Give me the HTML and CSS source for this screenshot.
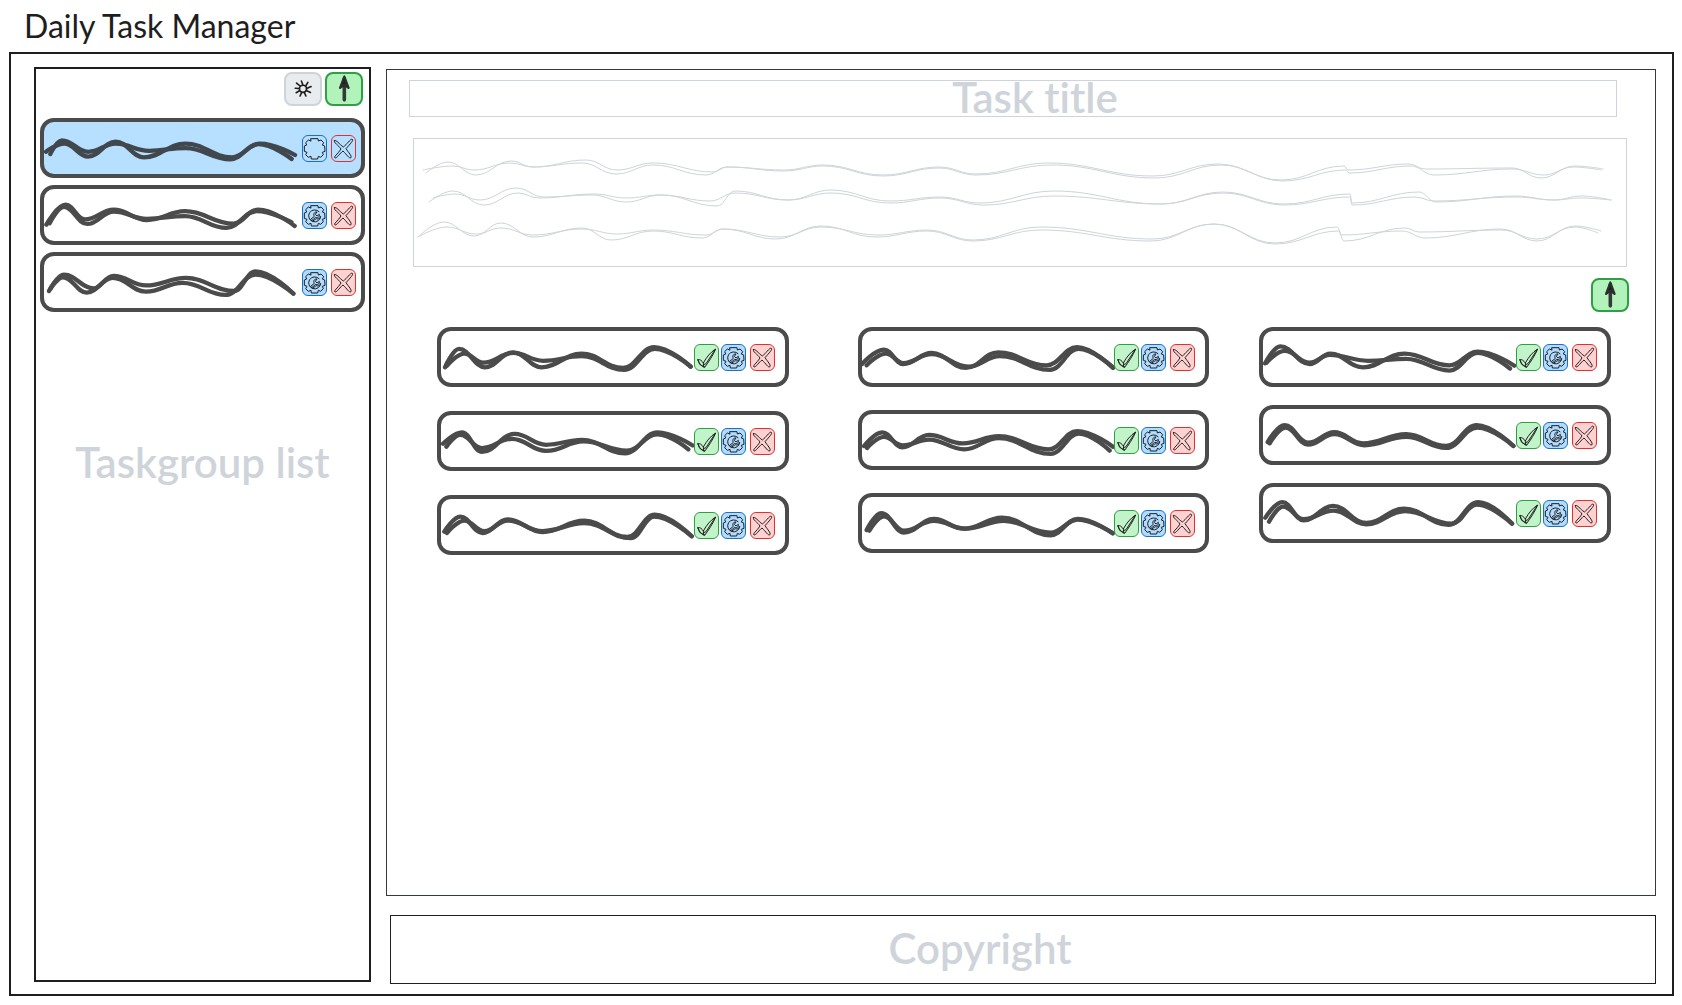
FILE: index.html
```html
<!DOCTYPE html>
<html lang="en">
<head>
<meta charset="utf-8">
<title>Daily Task Manager</title>
<link rel="stylesheet" href="styles.css">
</head>
<body>
<svg class="defs" aria-hidden="true">
  <symbol id="check" viewBox="0 0 69 75"><path d="M9 44C15 42 20 47 25 54C35 36 46 22 62 12C55 30 40 52 29 67C20 66 13 56 9 44ZM25 54L26 64M9 46L14 58L29 66M61 13L33 56L28 58"/></symbol>
  <symbol id="gear-outline" viewBox="0 0 69 75"><path d="M24 8L45 8L46 15L54 12L62 20L58 27L65 30L66 46L58 49L61 56L53 64L46 61L44 69L25 69L24 61L16 64L8 56L12 49L4 46L4 30L11 27L8 20L16 12L23 15Z"/></symbol>
  <symbol id="gear" viewBox="0 0 69 75"><use href="#gear-outline" width="69" height="75"/><path d="M48 26A18 18 0 1 0 53 40C52 46 46 50 40 47L28 55L23 49L34 40C30 33 34 26 42 27L37 34L42 39L49 34C51 41 45 46 38 43L27 52"/></symbol>
  <symbol id="cross" viewBox="0 0 69 75"><path d="M7 14C12 9 22 25 34 33C45 25 54 10 60 9C66 12 58 20 42 38C50 50 60 60 57 65C51 69 45 56 33 45C25 50 15 67 9 66C4 62 16 56 27 39C20 28 4 20 7 14Z"/></symbol>
  <symbol id="arrow" viewBox="0 0 114 105"><path class="shaft" d="M58 20V86"/><path class="head" d="M58 14L45 49L58 39L71 49Z"/></symbol>
  <symbol id="sun" viewBox="0 0 114 105"><circle cx="57" cy="52" r="11"/><path d="M57 41L52 28M65 44L72 32M68 51L82 45M67 57L80 63M61 63L66 74M53 63L48 74M46 58L36 64M46 51L33 50M49 44L37 34"/></symbol>
</svg>

<h1 class="app-title">Daily Task Manager</h1>
<div class="frame">
  <aside class="sidebar">
    <div class="toolbar">
      <button class="tool tool-grey" aria-label="Settings"><svg><use href="#sun"/></svg></button>
      <button class="tool tool-green" aria-label="Add task group"><svg><use href="#arrow"/></svg></button>
    </div>
    <ul class="groups">
      <li class="card card-active">
        <svg class="scribble" viewBox="129 364 777 159" preserveAspectRatio="none"><path data-wave="135,455 190,430 262,470 345,424 430,472 555,430 695,472 780,430 885,465"/><path data-wave="148,462 183,420 262,455 345,430 445,452 555,444 690,478 775,432 875,477"/></svg>
        <button class="mini blue" aria-label="Edit"><svg><use href="#gear-outline"/></svg></button><button class="mini red" aria-label="Delete"><svg><use href="#cross"/></svg></button>
      </li>
      <li class="card">
        <svg class="scribble" viewBox="135 567 777 159" preserveAspectRatio="none"><path data-wave="142,676 200,615 258,660 345,630 445,662 560,635 705,673 780,630 890,680"/><path data-wave="152,672 195,622 265,674 345,636 445,658 560,650 685,686 775,635 880,668"/></svg>
        <button class="mini blue" aria-label="Edit"><svg><use href="#gear"/></svg></button><button class="mini red" aria-label="Delete"><svg><use href="#cross"/></svg></button>
      </li>
      <li class="card">
        <svg class="scribble" viewBox="133 765 777 159" preserveAspectRatio="none"><path data-wave="148,872 193,822 282,864 342,826 440,855 560,832 705,872 770,812 884,880"/><path data-wave="152,866 190,830 262,877 340,832 440,874 550,847 680,884 770,822 884,880"/></svg>
        <button class="mini blue" aria-label="Edit"><svg><use href="#gear"/></svg></button><button class="mini red" aria-label="Delete"><svg><use href="#cross"/></svg></button>
      </li>
    </ul>
    <h2 class="label sidebar-label">Taskgroup list</h2>
  </aside>

  <div class="content">
    <main class="panel">
      <h2 class="label task-title">Task title</h2>
      <div class="description">
        <svg viewBox="0 0 1212 127" preserveAspectRatio="none">
          <path data-wave="9,31 39,27 60,31 96,24 119,28 168,24 202,35 239,26 292,36 313,28 370,32 409,27 469,37 525,29 562,36 638,26 741,39 807,26 869,42 932,31 935,34 997,27 1020,36 1098,30 1130,36 1159,28 1187,31"/>
          <path data-wave="12,34 34,23 62,36 97,22 119,28 172,21 203,31 239,24 299,33 313,28 370,31 409,26 469,36 525,28 562,35 634,24 739,37 804,25 867,41 930,27 934,31 995,25 1011,30 1098,29 1127,39 1161,27 1189,30"/>
          <path data-wave="15,63 39,52 70,66 104,54 125,59 180,55 212,59 247,56 296,62 321,54 374,61 417,54 476,64 526,59 570,66 640,57 747,65 809,54 870,66 936,58 938,66 1001,58 1020,62 1102,58 1140,61 1167,59 1197,61"/>
          <path data-wave="19,59 41,55 66,61 102,49 130,58 178,56 212,63 247,56 303,67 321,52 374,61 417,51 476,62 526,58 566,64 640,52 747,65 809,53 870,65 936,55 938,64 1005,53 1022,63 1102,57 1140,61 1167,57 1197,61"/>
          <path data-wave="4,98 30,83 60,97 87,84 119,98 168,89 197,101 239,92 288,99 309,90 362,100 407,87 462,98 513,92 559,102 627,91 737,102 800,85 861,105 925,92 927,96 988,92 1011,99 1087,90 1123,102 1161,87 1187,92"/>
          <path data-wave="4,98 33,88 62,95 87,89 119,96 168,90 203,95 239,91 292,96 309,90 366,98 407,88 464,96 513,91 559,101 627,88 739,100 800,85 861,104 923,88 930,102 991,89 1005,93 1087,91 1123,100 1161,88 1184,94"/>
        </svg>
      </div>
      <div class="actions">
        <button class="tool tool-green" aria-label="Add task"><svg><use href="#arrow"/></svg></button>
      </div>
      <div class="board">
        <ul class="column column-first">
          <li class="card">
            <svg class="scribble" viewBox="68 59 759 159" preserveAspectRatio="none"><path data-wave="80,170 122,114 200,170 285,124 370,170 490,128 615,172 708,108 818,168"/><path data-wave="86,165 138,128 195,156 285,126 375,150 490,136 618,178 710,114 818,168"/></svg>
            <button class="mini green" aria-label="Done"><svg><use href="#check"/></svg></button><button class="mini blue" aria-label="Edit"><svg><use href="#gear"/></svg></button><button class="mini red" aria-label="Delete"><svg><use href="#cross"/></svg></button>
          </li>
          <li class="card">
            <svg class="scribble" viewBox="62 317 759 159" preserveAspectRatio="none"><path data-wave="68,405 125,370 185,430 283,375 378,408 485,393 615,434 712,370 818,410"/><path data-wave="78,414 120,378 185,418 275,390 378,427 490,398 620,426 712,376 805,422"/></svg>
            <button class="mini green" aria-label="Done"><svg><use href="#check"/></svg></button><button class="mini blue" aria-label="Edit"><svg><use href="#gear"/></svg></button><button class="mini red" aria-label="Delete"><svg><use href="#cross"/></svg></button>
          </li>
          <li class="card">
            <svg class="scribble" viewBox="50 564 759 159" preserveAspectRatio="none"><path data-wave="60,664 108,618 175,668 250,626 355,665 480,630 610,680 692,612 803,678"/><path data-wave="68,668 120,630 180,662 250,630 355,662 480,638 620,684 690,618 803,678"/></svg>
            <button class="mini green" aria-label="Done"><svg><use href="#check"/></svg></button><button class="mini blue" aria-label="Edit"><svg><use href="#gear"/></svg></button><button class="mini red" aria-label="Delete"><svg><use href="#cross"/></svg></button>
          </li>
        </ul>
        <ul class="column column-second">
          <li class="card">
            <svg class="scribble" viewBox="66 57 759 159" preserveAspectRatio="none"><path data-wave="66,158 132,114 190,158 275,124 378,170 475,122 620,162 712,106 820,170"/><path data-wave="80,162 138,126 190,155 275,128 385,166 480,134 630,176 716,112 820,168"/></svg>
            <button class="mini green" aria-label="Done"><svg><use href="#check"/></svg></button><button class="mini blue" aria-label="Edit"><svg><use href="#gear"/></svg></button><button class="mini red" aria-label="Delete"><svg><use href="#cross"/></svg></button>
          </li>
          <li class="card">
            <svg class="scribble" viewBox="69 306 759 159" preserveAspectRatio="none"><path data-wave="75,404 130,362 190,408 270,370 372,396 480,374 630,414 715,358 823,406"/><path data-wave="84,410 135,376 192,402 270,384 376,414 480,380 636,428 720,366 813,418"/></svg>
            <button class="mini green" aria-label="Done"><svg><use href="#check"/></svg></button><button class="mini blue" aria-label="Edit"><svg><use href="#gear"/></svg></button><button class="mini red" aria-label="Delete"><svg><use href="#cross"/></svg></button>
          </li>
          <li class="card">
            <svg class="scribble" viewBox="64 555 759 159" preserveAspectRatio="none"><path data-wave="78,656 122,604 190,664 280,622 370,652 485,618 630,672 712,622 817,666"/><path data-wave="86,658 130,614 190,658 280,628 375,652 490,628 630,664 712,624 817,666"/></svg>
            <button class="mini green" aria-label="Done"><svg><use href="#check"/></svg></button><button class="mini blue" aria-label="Edit"><svg><use href="#gear"/></svg></button><button class="mini red" aria-label="Delete"><svg><use href="#cross"/></svg></button>
          </li>
        </ul>
        <ul class="column column-third">
          <li class="card">
            <svg class="scribble" viewBox="70 59 759 159" preserveAspectRatio="none"><path data-wave="76,158 122,106 210,160 272,128 370,170 495,128 630,164 715,122 825,165"/><path data-wave="80,156 135,120 210,156 270,132 385,150 500,144 630,180 715,126 812,174"/></svg>
            <button class="mini green" aria-label="Done"><svg><use href="#check"/></svg></button><button class="mini blue" aria-label="Edit"><svg><use href="#gear"/></svg></button><button class="mini red" aria-label="Delete"><svg><use href="#cross"/></svg></button>
          </li>
          <li class="card">
            <svg class="scribble" viewBox="70 289 759 159" preserveAspectRatio="none"><path data-wave="84,390 135,338 205,392 284,360 370,394 500,366 620,402 712,338 822,402"/><path data-wave="90,394 138,346 205,398 284,366 375,400 500,374 620,408 714,346 822,402"/></svg>
            <button class="mini green" aria-label="Done"><svg><use href="#check"/></svg></button><button class="mini blue" aria-label="Edit"><svg><use href="#gear"/></svg></button><button class="mini red" aria-label="Delete"><svg><use href="#cross"/></svg></button>
          </li>
          <li class="card">
            <svg class="scribble" viewBox="58 534 759 159" preserveAspectRatio="none"><path data-wave="65,628 116,580 180,636 268,592 368,644 482,600 615,650 705,580 806,646"/><path data-wave="76,640 118,594 180,632 270,606 368,648 485,608 625,646 700,588 806,646"/></svg>
            <button class="mini green" aria-label="Done"><svg><use href="#check"/></svg></button><button class="mini blue" aria-label="Edit"><svg><use href="#gear"/></svg></button><button class="mini red" aria-label="Delete"><svg><use href="#cross"/></svg></button>
          </li>
        </ul>
      </div>
    </main>
    <footer class="label footer">Copyright</footer>
  </div>
</div>
<script src="waves.js"></script>
</body>
</html>
```

FILE: styles.css
```css
* { box-sizing: border-box; }

body {
  margin: 0;
  min-height: 100vh;
  padding: 0 8px 9px 9px;
  display: flex;
  flex-direction: column;
  background: #fff;
  color: #1e1e1e;
  font-family: Lato, "Open Sans", sans-serif;
  font-variant-ligatures: none;
}

h1, h2, ul { margin: 0; padding: 0; }
ul { list-style: none; }
svg { display: block; fill: none; stroke-linecap: round; stroke-linejoin: round; overflow: visible; }
.defs { position: absolute; width: 0; height: 0; }

.app-title {
  height: 52px;
  padding: 6px 0 0 15px;
  font-size: 32px;
  line-height: 40px;
  font-weight: 400;
}

.frame {
  flex: 1;
  display: grid;
  grid-template-columns: 337px 1fr;
  gap: 15px;
  padding: 13px 16px 10px 23px;
  border: 2px solid #1e1e1e;
}

.sidebar {
  margin-bottom: 2px;
  padding: 3px 4px;
  border: 2px solid #1e1e1e;
}

.toolbar { display: flex; justify-content: flex-end; gap: 3px; padding-right: 2px; }

.tool {
  width: 38px;
  height: 34px;
  padding: 0;
  border: 2px solid;
  border-radius: 8px;
}
.tool svg { width: 38px; height: 34px; margin: -2px; stroke: #1e1e1e; stroke-width: 5px; }
.tool-grey { background: #e9ecef; border-color: #ced4da; }
.tool-green { background: #b2f2bb; border-color: #2f9e44; }
.shaft { stroke: #343a37; stroke-width: 11px; }
.head { fill: #1e1e1e; stroke: #2b302d; stroke-width: 7px; }

.groups { display: flex; flex-direction: column; gap: 7px; margin-top: 12px; }

.card {
  display: flex;
  align-items: center;
  height: 60px;
  border: 4px solid #4b4b4b;
  border-radius: 14px;
}
.card-active { background: #b7dfff; }
.groups .card { padding-right: 5px; }
.column .card { padding-right: 10px; }

.scribble { flex: 1; min-width: 0; height: 52px; stroke: #4b4b4b; stroke-width: 13px; }
.card-active .scribble { stroke: #40484e; }

.mini {
  flex: none;
  width: 25px;
  height: 27px;
  padding: 0;
  border: 1px solid;
  border-radius: 6px;
}
.mini svg { width: 23px; height: 25px; stroke: #1e1e1e; stroke-width: 3px; }
.mini.green { background: #c1f4c8; border-color: #2f9e44; margin-right: 2px; }
.mini.blue { background: #b2dcff; border-color: #1971c2; margin-right: 4px; }
.mini.red { background: #ffd2d2; border-color: #e03131; }
.card-active .mini { background: transparent; }

.label { color: #ced4da; font-size: 42px; line-height: 46px; font-weight: 600; text-align: center; }
.sidebar-label { margin-top: 127px; }

.content { display: flex; flex-direction: column; gap: 19px; padding-top: 2px; }

.panel { flex: 1; border: 1px solid #343a40; padding-top: 10px; }

.task-title {
  height: 37px;
  margin: 0 38px 21px 22px;
  padding-left: 44px;
  border: 1px solid #ced4da;
  line-height: 32px;
}

.description { height: 129px; margin: 0 28px 0 26px; border: 1px solid #ced4da; }
.description svg { width: 100%; height: 127px; stroke: #ced4da; stroke-width: 1px; }

.actions { display: flex; justify-content: flex-end; padding: 11px 26px 15px; }

.board {
  display: grid;
  grid-template-columns: 352fr 69fr 352fr 50fr 352fr;
  padding: 0 44px 0 50px;
}
.column { display: flex; flex-direction: column; }
.column-first { grid-column: 1; gap: 24px; }
.column-second { grid-column: 3; gap: 23px; }
.column-third { grid-column: 5; gap: 18px; }

.footer {
  height: 69px;
  margin-left: 4px;
  padding-right: 86px;
  border: 1px solid #1e1e1e;
  line-height: 64px;
}
```

FILE: waves.js
```js
// Joins the crests and troughs listed in data-wave with smooth curves.
document.querySelectorAll('[data-wave]').forEach(function (path) {
  var points = path.dataset.wave.split(' ').map(function (pair) {
    return pair.split(',').map(Number);
  });
  var last = points.length - 1;
  var d = 'M' + points[0].join(' ');
  for (var i = 1; i <= last; i++) {
    var a = points[i - 1];
    var b = points[i];
    var reach = (b[0] - a[0]) * 0.42;
    var start = i === 1 ? a : [a[0] + reach, a[1]];
    var end = i === last ? b : [b[0] - reach, b[1]];
    d += 'C' + [start, end, b].join(' ');
  }
  path.setAttribute('d', d);
});
```
